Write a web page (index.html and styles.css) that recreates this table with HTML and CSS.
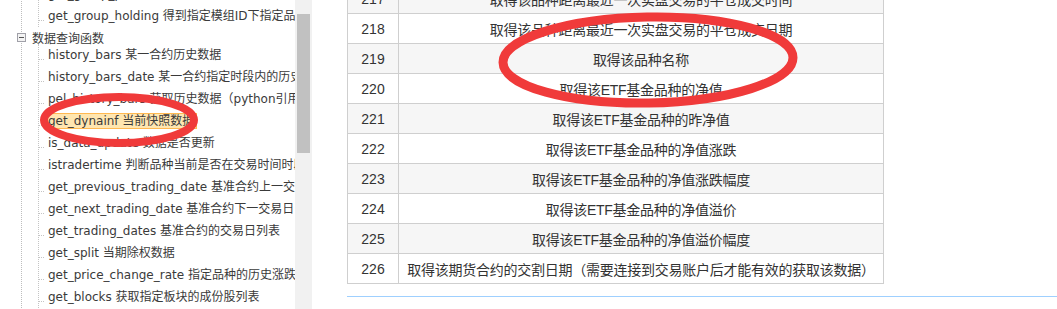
FILE: index.html
```html
<!DOCTYPE html>
<html lang="zh-CN">
<head>
<meta charset="utf-8">
<title>数据查询函数</title>
<link rel="stylesheet" href="styles.css">
</head>
<body>
<div class="page">
  <aside class="sidebar">
    <div class="tree">
      <ul class="root">
        <li class="group">
          <ul class="children">
            <li class="leaf"><span class="label">get_group_position 得到指定模组ID下指定品种的仓位</span></li>
            <li class="leaf"><span class="label">get_group_holding 得到指定模组ID下指定品种的持仓</span></li>
          </ul>
        </li>
        <li class="group">
          <div class="group-head">
            <svg class="toggle" width="9" height="9" viewBox="0 0 9 9"><rect x="0.5" y="0.5" width="8" height="8" fill="#f3f3f3" stroke="#a0a0a8"/><line x1="2" y1="4.5" x2="7" y2="4.5" stroke="#555"/></svg>
            <span class="group-name">数据查询函数</span>
          </div>
          <ul class="children">
            <li class="leaf"><span class="label">history_bars 某一合约历史数据</span></li>
            <li class="leaf"><span class="label">history_bars_date 某一合约指定时段内的历史数据</span></li>
            <li class="leaf"><span class="label">pel_history_bars 获取历史数据（python引用）</span></li>
            <li class="leaf"><span class="label selected">get_dynainf 当前快照数据</span></li>
            <li class="leaf"><span class="label">is_data_update 数据是否更新</span></li>
            <li class="leaf"><span class="label">istradertime 判断品种当前是否在交易时间时段</span></li>
            <li class="leaf"><span class="label">get_previous_trading_date 基准合约上一交易日</span></li>
            <li class="leaf"><span class="label">get_next_trading_date 基准合约下一交易日</span></li>
            <li class="leaf"><span class="label">get_trading_dates 基准合约的交易日列表</span></li>
            <li class="leaf"><span class="label">get_split 当期除权数据</span></li>
            <li class="leaf"><span class="label">get_price_change_rate 指定品种的历史涨跌幅</span></li>
            <li class="leaf"><span class="label">get_blocks 获取指定板块的成份股列表</span></li>
          </ul>
        </li>
      </ul>
    </div>
    <div class="scrollbar"><div class="thumb"></div></div>
  </aside>

  <main class="content">
    <table class="fields">
      <tbody>
        <tr class="odd"><td class="num">217</td><td class="desc">取得该品种距离最近一次实盘交易的平仓成交时间</td></tr>
        <tr><td class="num">218</td><td class="desc">取得该品种距离最近一次实盘交易的平仓成交日期</td></tr>
        <tr class="odd"><td class="num">219</td><td class="desc">取得该品种名称</td></tr>
        <tr><td class="num">220</td><td class="desc">取得该ETF基金品种的净值</td></tr>
        <tr class="odd"><td class="num">221</td><td class="desc">取得该ETF基金品种的昨净值</td></tr>
        <tr><td class="num">222</td><td class="desc">取得该ETF基金品种的净值涨跌</td></tr>
        <tr class="odd"><td class="num">223</td><td class="desc">取得该ETF基金品种的净值涨跌幅度</td></tr>
        <tr><td class="num">224</td><td class="desc">取得该ETF基金品种的净值溢价</td></tr>
        <tr class="odd"><td class="num">225</td><td class="desc">取得该ETF基金品种的净值溢价幅度</td></tr>
        <tr><td class="num">226</td><td class="desc">取得该期货合约的交割日期（需要连接到交易账户后才能有效的获取该数据）</td></tr>
      </tbody>
    </table>
    <hr class="rule">
  </main>

  <svg class="marks" width="1057" height="309" viewBox="0 0 1057 309">
    <ellipse cx="648" cy="60" rx="145" ry="43" transform="rotate(-1 648 60)" fill="none" stroke="#f03a3a" stroke-width="9"/>
    <ellipse cx="119" cy="120" rx="75" ry="23" fill="none" stroke="#f03a3a" stroke-width="8"/>
  </svg>
</div>
</body>
</html>
```
FILE: styles.css
```css
html, body {
  margin: 0;
  padding: 0;
  background: #fff;
}

.page {
  position: relative;
  display: flex;
  width: 1057px;
  height: 309px;
  overflow: hidden;
  font-family: "Liberation Sans", "Noto Sans CJK SC", sans-serif;
  color: #333;
}

/* ---------- sidebar tree ---------- */
.sidebar {
  display: flex;
  flex: 0 0 312px;
  height: 309px;
}

.tree {
  width: 295px;
  overflow: hidden;
  font-family: "DejaVu Sans", "Noto Sans CJK SC", sans-serif;
  font-size: 12px;
  color: #3a3a3a;
  white-space: nowrap;
}

.root,
.children {
  list-style: none;
  margin: 0;
  padding: 0;
}

.root {
  margin: -17px 0 0 21px;
  border-left: 1px dotted #bdbdbd;
}

.children {
  margin-left: 16px;
  border-left: 1px dotted #c4c4c4;
}

.leaf {
  display: flex;
  align-items: center;
  height: 22px;
}

.leaf::before {
  content: "";
  flex: 0 0 5px;
  height: 0;
  margin-top: 8px;
  border-top: 1px dotted #c4c4c4;
}

.label {
  margin-left: 2px;
  padding: 0 2px 0 1px;
  line-height: 14px;
  border: 1px solid transparent;
}

.label.selected {
  background: #ffe6b0;
  border-color: #ffb951;
}

.group-head {
  display: flex;
  align-items: center;
  height: 14px;
  padding-top: 3px;
  margin-left: -5px;
}

.toggle {
  flex: 0 0 9px;
  display: block;
}

.group-name {
  margin-left: 6px;
}

.scrollbar {
  flex: 0 0 13px;
  padding: 14px 2px 0;
  background: #f1f1f1;
}

.thumb {
  height: 139px;
  background: #c1c1c1;
}

/* ---------- content table ---------- */
.content {
  flex: 1 1 auto;
  margin-left: 35px;
  min-width: 0;
}

.fields {
  width: 537px;
  margin-top: -17px;
  border-collapse: collapse;
  font-size: 14px;
  color: #333;
}

.fields td {
  height: 29px;
  padding: 0;
  border: 1px solid #cfcfcf;
  text-align: center;
  vertical-align: middle;
}

.fields .num {
  width: 50px;
}

.fields .desc {
  letter-spacing: -0.25px;
}

.fields tr.odd td {
  background: #f6f6f6;
}

.rule {
  margin: 12px 0 0;
  height: 0;
  border: 0;
  border-top: 1px solid #9fd0ff;
}

/* ---------- annotation overlay ---------- */
.marks {
  position: absolute;
  left: 0;
  top: 0;
  pointer-events: none;
}
```
